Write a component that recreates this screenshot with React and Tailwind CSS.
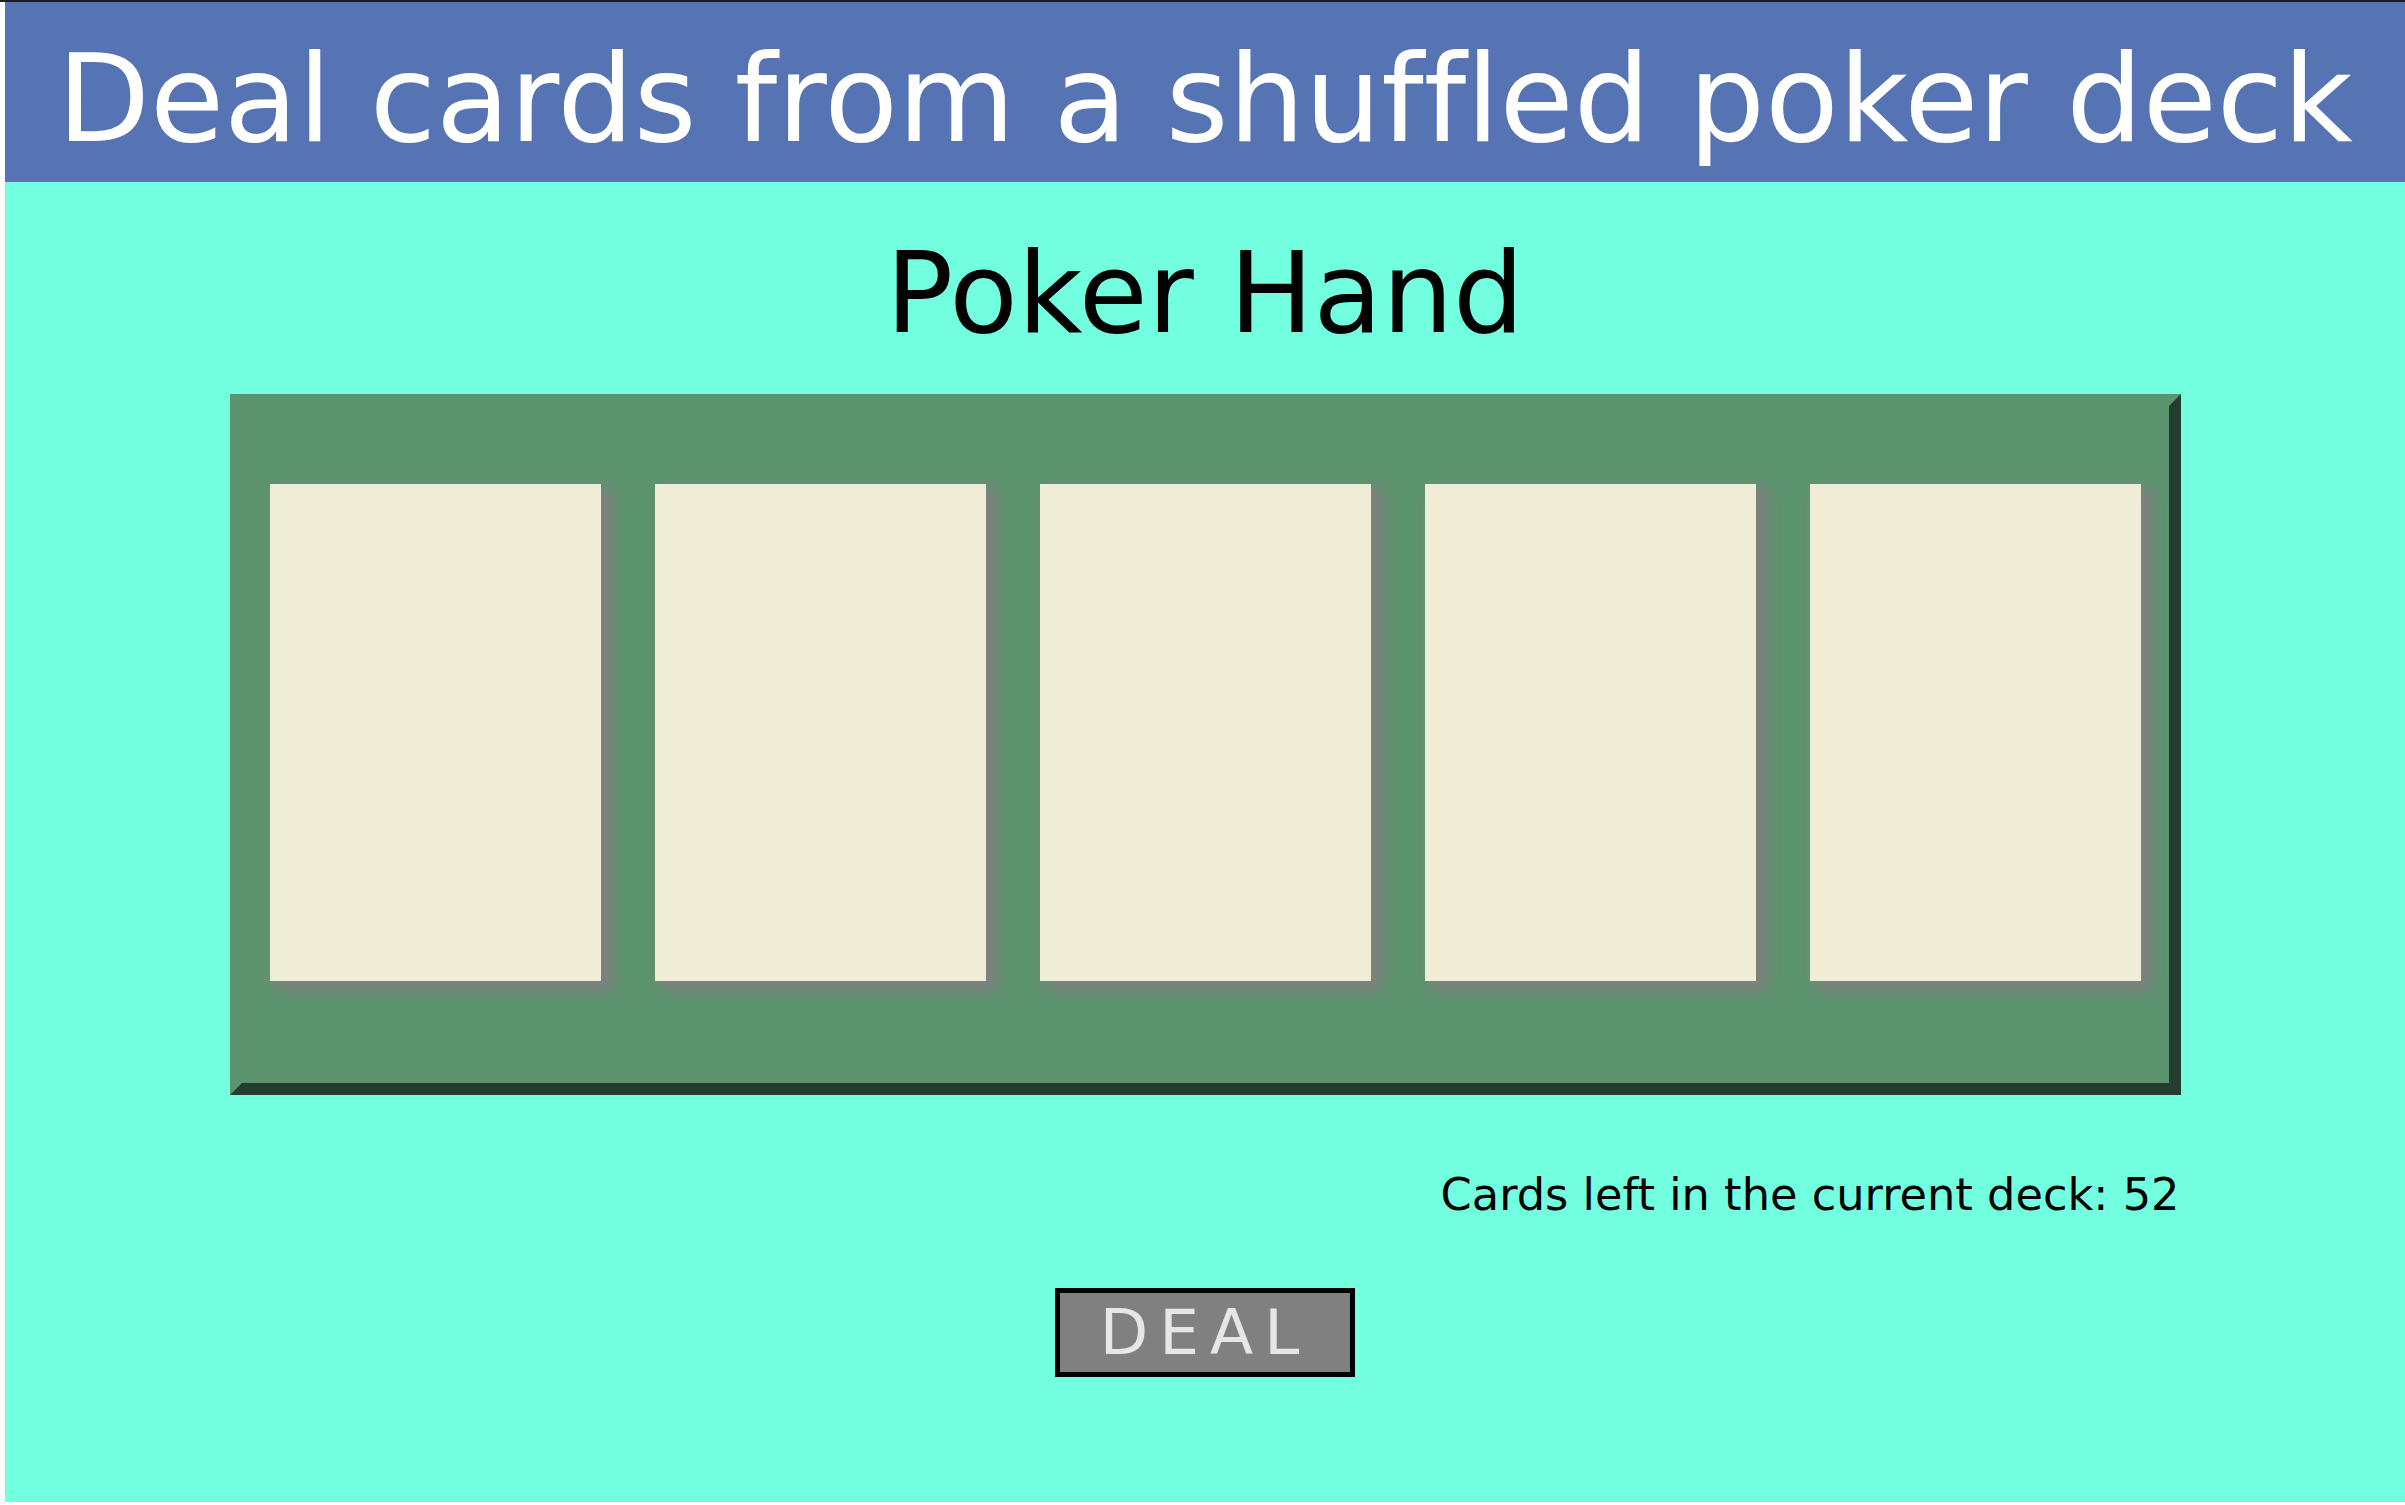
import React from 'react';

const CARDS = [0, 1, 2, 3, 4];

const Card = () => (
  <div className="w-[331px] h-[497px] bg-[#f0edd6] shadow-[9px_7px_14px_3px_#808080]" />
);

const App = () => {
  return (
    <div className="w-[2405px] h-[1505px] bg-white border-t-2 border-[#1b1b26] pl-[5px] font-['DejaVu_Sans',sans-serif] [font-variant-ligatures:none] overflow-hidden">
      <header className="h-[180px] bg-[#5673b3] pt-[27px] text-center">
        <h1 className="text-[120.5px] leading-[140px] text-white whitespace-nowrap">
          Deal cards from a shuffled poker deck
        </h1>
      </header>

      <main className="h-[1320px] bg-[#71ffe0] flex flex-col items-center">
        <h2 className="mt-[46px] text-[112px] leading-[131px] text-black">Poker Hand</h2>

        <div className="mt-[35px] w-[1951px] border-[12px] border-t-[#5b946e] border-l-[#5b946e] border-r-[#243d2f] border-b-[#243d2f] bg-[#5b946e] pt-[78px] pb-[102px] px-[28px]">
          <div className="flex gap-[54px]">
            {CARDS.map((i) => (
              <Card key={i} />
            ))}
          </div>
        </div>

        <div className="mt-[74px] w-[1951px] text-right text-[44.7px] leading-[52px] text-black pr-[1px]">
          Cards left in the current deck: 52
        </div>

        <button className="mt-[67px] w-[300px] h-[89px] border-[5px] border-black bg-[#808080] text-[#e6e6e6] text-[63px] leading-[79px] tracking-[11px]">
          DEAL
        </button>
      </main>
    </div>
  );
};

export default App;
